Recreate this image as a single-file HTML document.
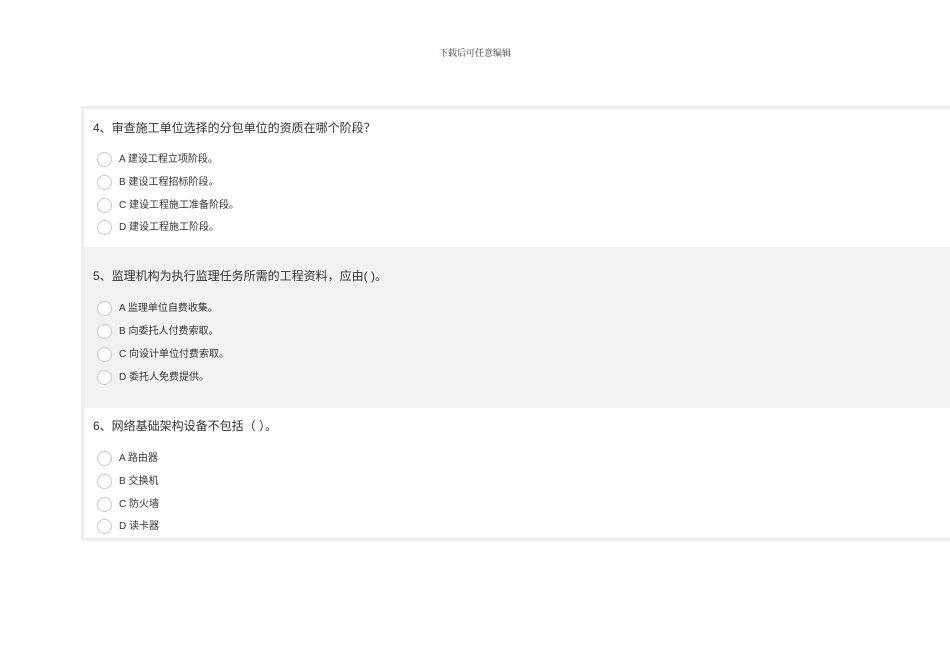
<!DOCTYPE html>
<html><head><meta charset="utf-8"><style>
body{margin:0;width:950px;height:672px;background:#fff;position:relative;overflow:hidden;font-family:"Liberation Sans","Noto Sans CJK SC",sans-serif;color:#333}
.hd{position:absolute;top:46px;left:0;width:950px;text-align:center;font-family:"Liberation Serif","Noto Serif CJK SC",serif;font-size:9px;color:#333}
.box{position:absolute;left:81px;top:106px;width:872px;height:435px;background:#eee}
.s{position:absolute;left:3px;width:869px}
.q{position:absolute;left:9px;font-size:12px;color:#333;white-space:nowrap}
.o{position:absolute;left:13px;height:16px;font-size:10px;white-space:nowrap;line-height:16px}
.o i{position:absolute;left:0;top:0;width:13px;height:13px;border:1px solid #c8c8c8;border-radius:50%;background:#fff}
.o span{position:absolute;left:22px;top:0px}
</style></head><body>
<div class="hd">下载后可任意编辑</div>
<div class="box">
<div class="s" style="top:3px;height:138px;background:#fff">
<div class="q" style="top:10px">4、审查施工单位选择的分包单位的资质在哪个阶段？</div>
<div class="o" style="top:43px"><i></i><span>A 建设工程立项阶段。</span></div>
<div class="o" style="top:66px"><i></i><span>B 建设工程招标阶段。</span></div>
<div class="o" style="top:89px"><i></i><span>C 建设工程施工准备阶段。</span></div>
<div class="o" style="top:111px"><i></i><span>D 建设工程施工阶段。</span></div>
</div>
<div class="s" style="top:141px;height:161px;background:#f2f2f2">
<div class="q" style="top:20px">5、监理机构为执行监理任务所需的工程资料，应由( )。</div>
<div class="o" style="top:54px"><i></i><span>A 监理单位自费收集。</span></div>
<div class="o" style="top:77px"><i></i><span>B 向委托人付费索取。</span></div>
<div class="o" style="top:100px"><i></i><span>C 向设计单位付费索取。</span></div>
<div class="o" style="top:123px"><i></i><span>D 委托人免费提供。</span></div>
</div>
<div class="s" style="top:302px;height:130px;background:#fff">
<div class="q" style="top:9px">6、网络基础架构设备不包括（ ）。</div>
<div class="o" style="top:43px"><i></i><span>A 路由器</span></div>
<div class="o" style="top:66px"><i></i><span>B 交换机</span></div>
<div class="o" style="top:89px"><i></i><span>C 防火墙</span></div>
<div class="o" style="top:111px"><i></i><span>D 读卡器</span></div>
</div>
</div>
</body></html>
